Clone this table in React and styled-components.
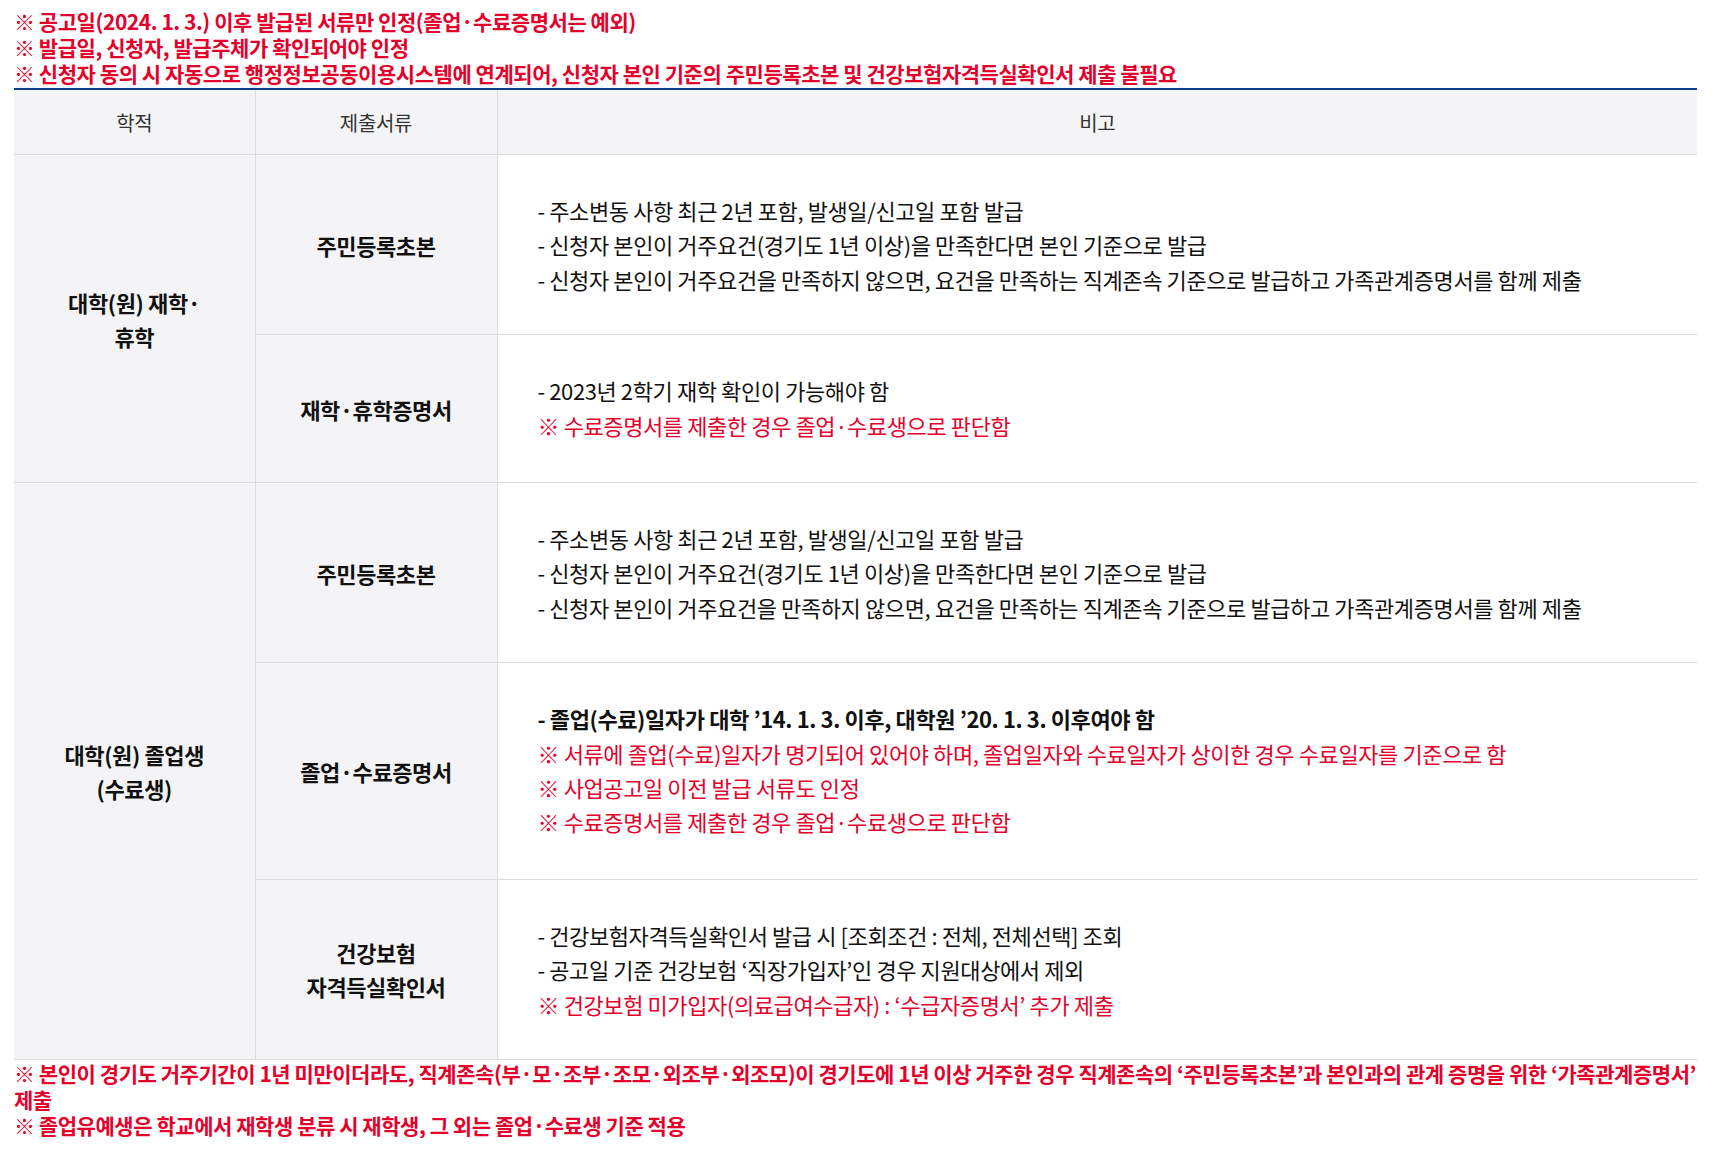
import React from "react";
import styled, { createGlobalStyle } from "styled-components";

const RED = "#e5002b";
const LINE = "#dcdcdf";
const GRAY = "#f4f4f6";

const Global = createGlobalStyle`
  html, body { margin: 0; padding: 0; background: #fff; }
  body {
    font-family: "Noto Sans CJK KR", "Noto Sans", sans-serif;
    color: #111;
  }
`;

const Page = styled.div`
  padding: 8px 20px 0 14px;
`;

const Notes = styled.div`
  display: flex;
  flex-direction: column;
  padding-bottom: ${(p) => (p.$top ? "2px" : "0")};
`;

const Note = styled.p`
  margin: 0;
  color: ${RED};
  font-weight: 700;
  font-size: 21px;
  line-height: 26px;
  letter-spacing: -0.45px;
`;

const Table = styled.table`
  width: 100%;
  border-collapse: collapse;
  table-layout: fixed;
  border-top: 2px solid #0d3c87;
  border-bottom: 1px solid ${LINE};
`;

const Th = styled.th`
  background: ${GRAY};
  font-weight: 400;
  font-size: 20px;
  color: #333;
  height: 64px;
  padding: 0;
  text-align: center;
  border-bottom: 1px solid ${LINE};
  letter-spacing: -0.3px;
  & + & { border-left: 1px solid ${LINE}; }
`;

const LabelCell = styled.td`
  background: ${GRAY};
  font-weight: 700;
  font-size: 22px;
  line-height: 34px;
  text-align: center;
  vertical-align: middle;
  padding: 0 10px;
  border-top: 1px solid ${LINE};
  border-left: ${(p) => (p.$first ? "none" : `1px solid ${LINE}`)};
  letter-spacing: -0.4px;
`;

const DescCell = styled.td`
  background: #fff;
  padding: 38px 20px ${(p) => (p.$extra ? "40px" : "38px")} 40px;
  border-top: 1px solid ${LINE};
  border-left: 1px solid ${LINE};
  vertical-align: middle;
`;

const Line = styled.div`
  font-size: 22px;
  line-height: 34.4px;
  letter-spacing: -0.4px;
  color: ${(p) => (p.$red ? RED : "#111")};
  font-weight: ${(p) => (p.$bold ? 700 : 400)};
`;

const rows = [
  {
    group: ["대학(원) 재학·", "휴학"],
    items: [
      {
        doc: ["주민등록초본"],
        lines: [
          { t: "- 주소변동 사항 최근 2년 포함, 발생일/신고일 포함 발급" },
          { t: "- 신청자 본인이 거주요건(경기도 1년 이상)을 만족한다면 본인 기준으로 발급" },
          { t: "- 신청자 본인이 거주요건을 만족하지 않으면, 요건을 만족하는 직계존속 기준으로 발급하고 가족관계증명서를 함께 제출" },
        ],
      },
      {
        doc: ["재학·휴학증명서"],
        extra: true,
        lines: [
          { t: "- 2023년 2학기 재학 확인이 가능해야 함" },
          { t: "※ 수료증명서를 제출한 경우 졸업·수료생으로 판단함", red: true },
        ],
      },
    ],
  },
  {
    group: ["대학(원) 졸업생", "(수료생)"],
    items: [
      {
        doc: ["주민등록초본"],
        lines: [
          { t: "- 주소변동 사항 최근 2년 포함, 발생일/신고일 포함 발급" },
          { t: "- 신청자 본인이 거주요건(경기도 1년 이상)을 만족한다면 본인 기준으로 발급" },
          { t: "- 신청자 본인이 거주요건을 만족하지 않으면, 요건을 만족하는 직계존속 기준으로 발급하고 가족관계증명서를 함께 제출" },
        ],
      },
      {
        doc: ["졸업·수료증명서"],
        extra: true,
        lines: [
          { t: "- 졸업(수료)일자가 대학 ’14. 1. 3. 이후, 대학원 ’20. 1. 3. 이후여야 함", bold: true },
          { t: "※ 서류에 졸업(수료)일자가 명기되어 있어야 하며, 졸업일자와 수료일자가 상이한 경우 수료일자를 기준으로 함", red: true },
          { t: "※ 사업공고일 이전 발급 서류도 인정", red: true },
          { t: "※ 수료증명서를 제출한 경우 졸업·수료생으로 판단함", red: true },
        ],
      },
      {
        doc: ["건강보험", "자격득실확인서"],
        lines: [
          { t: "- 건강보험자격득실확인서 발급 시 [조회조건 : 전체, 전체선택] 조회" },
          { t: "- 공고일 기준 건강보험 ‘직장가입자’인 경우 지원대상에서 제외" },
          { t: "※ 건강보험 미가입자(의료급여수급자) : ‘수급자증명서’ 추가 제출", red: true },
        ],
      },
    ],
  },
];

const Multi = ({ parts }) =>
  parts.map((p, i) => (
    <React.Fragment key={i}>
      {i > 0 && <br />}
      {p}
    </React.Fragment>
  ));

export default function App() {
  return (
    <Page>
      <Global />
      <Notes $top>
        <Note>※ 공고일(2024. 1. 3.) 이후 발급된 서류만 인정(졸업·수료증명서는 예외)</Note>
        <Note>※ 발급일, 신청자, 발급주체가 확인되어야 인정</Note>
        <Note>※ 신청자 동의 시 자동으로 행정정보공동이용시스템에 연계되어, 신청자 본인 기준의 주민등록초본 및 건강보험자격득실확인서 제출 불필요</Note>
      </Notes>
      <Table>
        <colgroup>
          <col style={{ width: "241px" }} />
          <col style={{ width: "242px" }} />
          <col />
        </colgroup>
        <thead>
          <tr>
            <Th>학적</Th>
            <Th>제출서류</Th>
            <Th>비고</Th>
          </tr>
        </thead>
        <tbody>
          {rows.map((g, gi) =>
            g.items.map((it, ii) => (
              <tr key={`${gi}-${ii}`}>
                {ii === 0 && (
                  <LabelCell $first rowSpan={g.items.length}>
                    <Multi parts={g.group} />
                  </LabelCell>
                )}
                <LabelCell>
                  <Multi parts={it.doc} />
                </LabelCell>
                <DescCell $extra={it.extra}>
                  {it.lines.map((l, li) => (
                    <Line key={li} $red={l.red} $bold={l.bold}>
                      {l.t}
                    </Line>
                  ))}
                </DescCell>
              </tr>
            ))
          )}
        </tbody>
      </Table>
      <Notes>
        <Note>
          ※ 본인이 경기도 거주기간이 1년 미만이더라도, 직계존속(부·모·조부·조모·외조부·외조모)이 경기도에 1년 이상 거주한 경우 직계존속의 ‘주민등록초본’과 본인과의 관계 증명을 위한 ‘가족관계증명서’ 제출
        </Note>
        <Note>※ 졸업유예생은 학교에서 재학생 분류 시 재학생, 그 외는 졸업·수료생 기준 적용</Note>
      </Notes>
    </Page>
  );
}
